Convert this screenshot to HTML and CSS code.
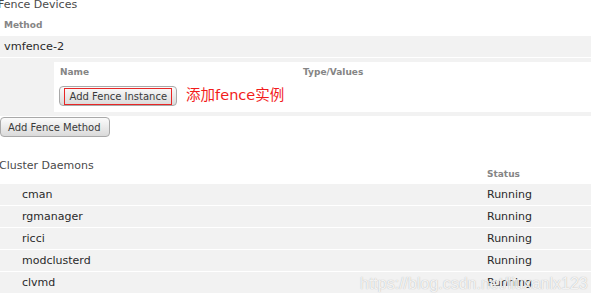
FILE: index.html
```html
<!DOCTYPE html>
<html lang="zh-CN">
<head>
    <meta charset="UTF-8">
    <meta name="viewport" content="width=device-width, initial-scale=1.0">
    <title>Fence Devices</title>
    <link rel="stylesheet" href="styles.css">
</head>
<body>
    <div class="page">
        <h2 class="section-title fence-title">Fence Devices</h2>
        <div class="col-head method-head">Method</div>
        <div class="method-row">vmfence-2</div>
        <div class="instances">
            <div class="instance-box">
                <div class="instance-head">
                    <span>Name</span>
                    <span>Type/Values</span>
                </div>
                <div class="instance-actions">
                    <button type="button" class="btn btn-instance"><span class="mark">Add Fence Instance</span></button>
                    <span class="note">添加fence实例</span>
                </div>
            </div>
        </div>
        <button type="button" class="btn btn-method">Add Fence Method</button>

        <h2 class="section-title daemon-title">Cluster Daemons</h2>
        <div class="daemons">
            <div class="daemon-head">
                <span></span>
                <span class="col-head">Status</span>
            </div>
            <div class="daemon-row"><span>cman</span><span>Running</span></div>
            <div class="daemon-row"><span>rgmanager</span><span>Running</span></div>
            <div class="daemon-row"><span>ricci</span><span>Running</span></div>
            <div class="daemon-row"><span>modclusterd</span><span>Running</span></div>
            <div class="daemon-row"><span>clvmd</span><span>Running</span></div>
        </div>
    </div>
    <div class="watermark">https://blog.csdn.net/liuxanlx123</div>
</body>
</html>
```

FILE: styles.css
```css
body {
    margin: 0;
    background-color: #fff;
    font-family: "DejaVu Sans", sans-serif;
    color: #2a2a2a;
    overflow: hidden;
}
.page {
    width: 591px;
}
.section-title {
    margin: 0;
    font-size: 11px;
    font-weight: normal;
    color: #4a4a4a;
}
.fence-title {
    margin-left: -2px;
    margin-top: -1px;
    height: 18px;
    line-height: 11px;
}
.col-head {
    font-size: 9px;
    font-weight: bold;
    color: #858585;
}
.method-head {
    height: 19px;
    line-height: 17px;
    padding-left: 4px;
}
.method-row {
    height: 21px;
    line-height: 21px;
    padding-left: 4px;
    font-size: 11.3px;
    background-color: #f2f2f2;
}
.instances {
    margin-top: 1px;
    padding: 4px 0 4px 54px;
    background-color: #f2f2f2;
}
.instance-box {
    height: 50px;
    padding-left: 5px;
    background-color: #fff;
}
.instance-head {
    display: grid;
    grid-template-columns: 243px 1fr;
    height: 24px;
    line-height: 20px;
    padding-left: 1px;
    font-size: 9px;
    font-weight: bold;
    color: #858585;
}
.instance-actions {
    display: flex;
    align-items: center;
}
.btn {
    height: 20px;
    border: 1px solid #a9a9a9;
    border-radius: 4px;
    background: linear-gradient(#fbfbfb, #dadada);
    font-family: "DejaVu Sans", sans-serif;
    font-size: 10px;
    color: #3a3a3a;
    cursor: pointer;
}
.btn-instance {
    padding: 0 4px 0 4px;
}
.mark {
    display: block;
    height: 15px;
    line-height: 15px;
    padding: 0 4px 0 4.5px;
    border: 1.5px solid #e82626;
}
.note {
    margin-left: 9px;
    margin-top: -5px;
    font-family: "DejaVu Sans", "Noto Sans CJK SC", sans-serif;
    font-size: 14.5px;
    color: #f21c1c;
}
.btn-method {
    display: block;
    margin-top: 1px;
    padding: 0 8px 0 7px;
}
.daemon-title {
    margin-top: 23px;
    margin-left: -1px;
    height: 10px;
    line-height: 11px;
}
.daemon-head {
    display: grid;
    grid-template-columns: 487px 1fr;
    height: 14px;
    line-height: 9px;
}
.daemon-row {
    display: grid;
    grid-template-columns: 465px 1fr;
    height: 21px;
    line-height: 21px;
    margin-bottom: 1px;
    padding-left: 22px;
    font-size: 11px;
    background-color: #f2f2f2;
}
.watermark {
    position: absolute;
    left: 360px;
    top: 275px;
    font-family: "Liberation Sans", sans-serif;
    font-size: 16px;
    color: rgba(255, 255, 255, 0.85);
    text-shadow: 0 0 1px rgba(120, 120, 120, 0.6);
}
```
